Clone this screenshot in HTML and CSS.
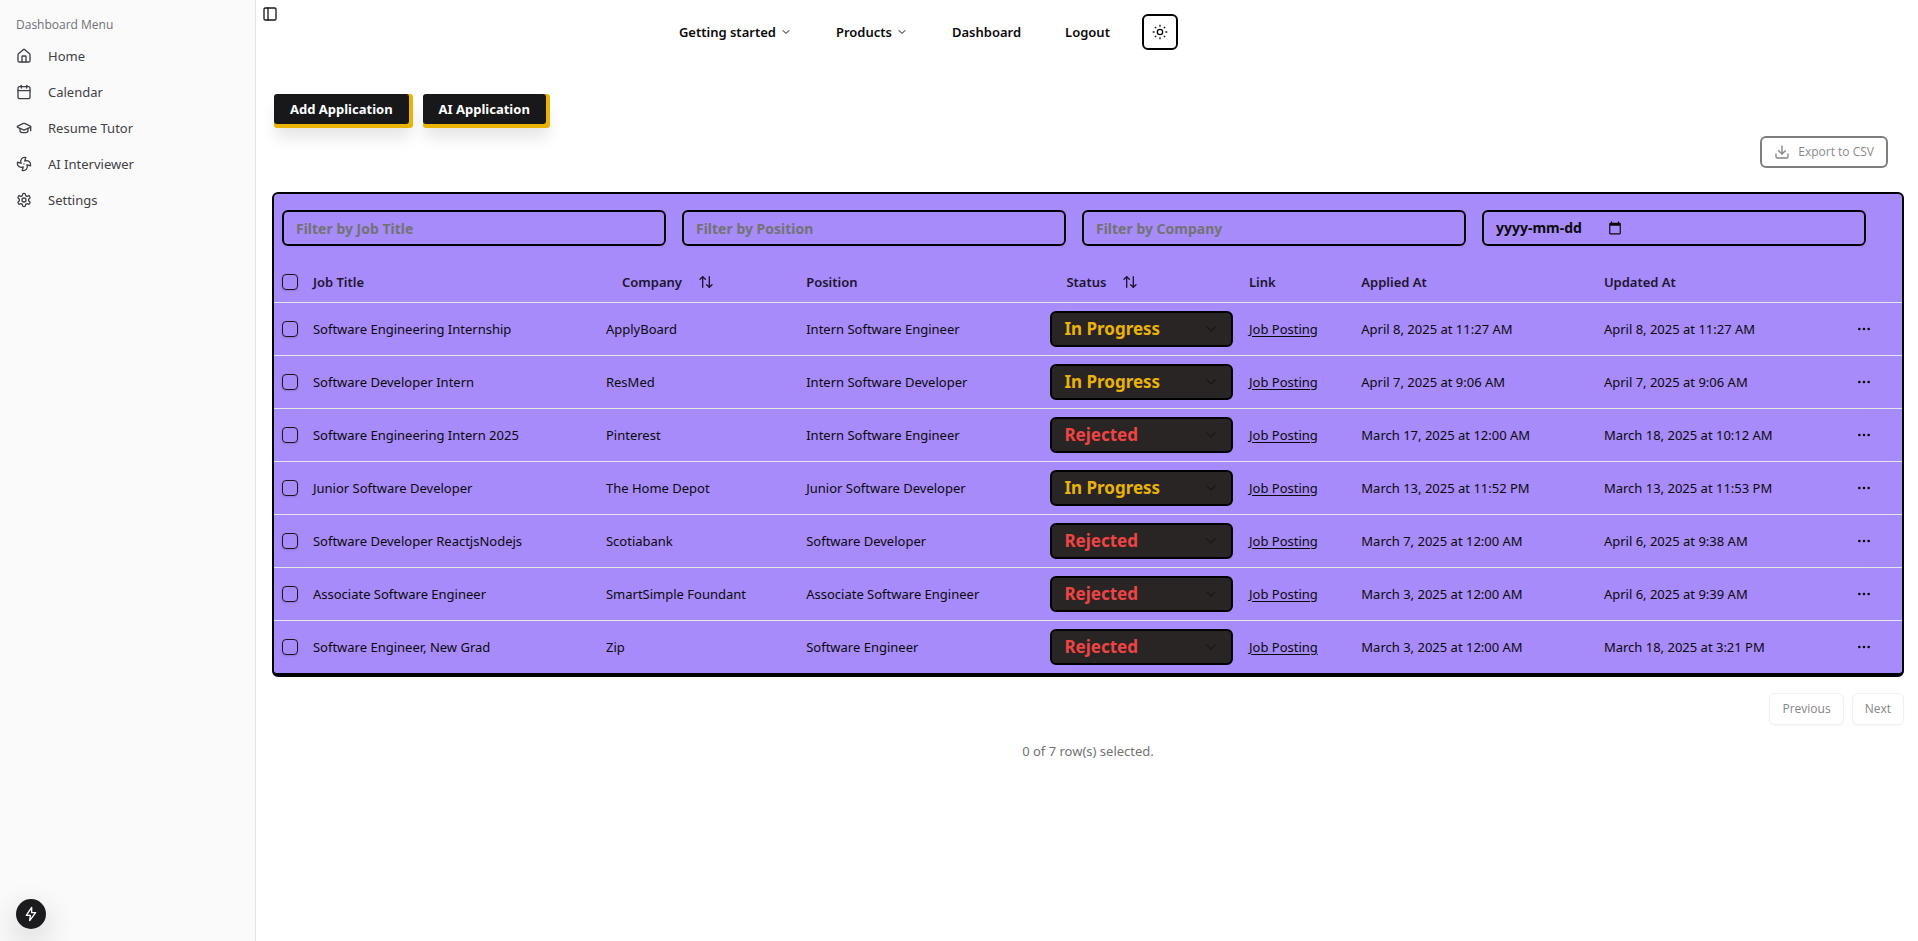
FILE: index.html
```html
<!DOCTYPE html>
<html lang="en">
<head>
<meta charset="utf-8">
<meta name="viewport" content="width=device-width, initial-scale=1">
<title>Job Applications Dashboard</title>
<link rel="stylesheet" href="styles.css">
</head>
<body>
<svg class="sprite" aria-hidden="true">
  <symbol id="i-home" viewBox="0 0 24 24"><path d="M15 21v-8a1 1 0 0 0-1-1h-4a1 1 0 0 0-1 1v8"/><path d="M3 10a2 2 0 0 1 .709-1.528l7-5.999a2 2 0 0 1 2.582 0l7 5.999A2 2 0 0 1 21 10v9a2 2 0 0 1-2 2H5a2 2 0 0 1-2-2z"/></symbol>
  <symbol id="i-calendar" viewBox="0 0 24 24"><path d="M8 2v4"/><path d="M16 2v4"/><rect width="18" height="18" x="3" y="4" rx="2"/><path d="M3 10h18"/></symbol>
  <symbol id="i-cap" viewBox="0 0 24 24"><path d="M21.42 10.922a1 1 0 0 0-.019-1.838L12.83 5.18a2 2 0 0 0-1.66 0L2.6 9.08a1 1 0 0 0 0 1.832l8.57 3.908a2 2 0 0 0 1.66 0z"/><path d="M22 10v6"/><path d="M6 12.5V16a6 3 0 0 0 12 0v-3.5"/></symbol>
  <symbol id="i-fan" viewBox="0 0 24 24"><path d="M10.827 16.379a6.082 6.082 0 0 1-8.618-7.002l5.412 1.45a6.082 6.082 0 0 1 7.002-8.618l-1.45 5.412a6.082 6.082 0 0 1 8.618 7.002l-5.412-1.45a6.082 6.082 0 0 1-7.002 8.618l1.45-5.412Z"/><path d="M12 12v.01"/></symbol>
  <symbol id="i-gear" viewBox="0 0 24 24"><path d="M12.22 2h-.44a2 2 0 0 0-2 2v.18a2 2 0 0 1-1 1.73l-.43.25a2 2 0 0 1-2 0l-.15-.08a2 2 0 0 0-2.73.73l-.22.38a2 2 0 0 0 .73 2.73l.15.1a2 2 0 0 1 1 1.72v.51a2 2 0 0 1-1 1.74l-.15.09a2 2 0 0 0-.73 2.73l.22.38a2 2 0 0 0 2.73.73l.15-.08a2 2 0 0 1 2 0l.43.25a2 2 0 0 1 1 1.73V20a2 2 0 0 0 2 2h.44a2 2 0 0 0 2-2v-.18a2 2 0 0 1 1-1.73l.43-.25a2 2 0 0 1 2 0l.15.08a2 2 0 0 0 2.73-.73l.22-.39a2 2 0 0 0-.73-2.73l-.15-.08a2 2 0 0 1-1-1.74v-.5a2 2 0 0 1 1-1.74l.15-.09a2 2 0 0 0 .73-2.73l-.22-.38a2 2 0 0 0-2.73-.73l-.15.08a2 2 0 0 1-2 0l-.43-.25a2 2 0 0 1-1-1.73V4a2 2 0 0 0-2-2z"/><circle cx="12" cy="12" r="3"/></symbol>
  <symbol id="i-panel" viewBox="0 0 24 24"><rect width="18" height="18" x="3" y="3" rx="2"/><path d="M9 3v18"/></symbol>
  <symbol id="i-chevron" viewBox="0 0 24 24"><path d="m6 9 6 6 6-6"/></symbol>
  <symbol id="i-sun" viewBox="0 0 24 24"><circle cx="12" cy="12" r="4"/><path d="M12 1v3"/><path d="M12 20v3"/><path d="m4.500 4.500 1.700 1.700"/><path d="m17.800 17.800 1.700 1.700"/><path d="M1 12h3"/><path d="M20 12h3"/><path d="m6.200 17.800-1.700 1.700"/><path d="m19.500 4.500-1.700 1.700"/></symbol>
  <symbol id="i-download" viewBox="0 0 24 24"><path d="M21 15v4a2 2 0 0 1-2 2H5a2 2 0 0 1-2-2v-4"/><path d="m7 10 5 5 5-5"/><path d="M12 15V3"/></symbol>
  <symbol id="i-sort" viewBox="0 0 24 24"><path d="m21 16-4 4-4-4"/><path d="M17 20V4"/><path d="m3 8 4-4 4 4"/><path d="M7 4v16"/></symbol>
  <symbol id="i-dots" viewBox="0 0 24 24"><circle cx="12" cy="12" r="1"/><circle cx="19" cy="12" r="1"/><circle cx="5" cy="12" r="1"/></symbol>
  <symbol id="i-date" viewBox="0 0 24 24"><path class="solid" d="M20 3h-1V1h-2v2H7V1H5v2H4c-1.100 0-2 .9-2 2v16c0 1.100.9 2 2 2h16c1.100 0 2-.9 2-2V5c0-1.100-.9-2-2-2zm0 18H4V8h16v13z"/></symbol>
  <symbol id="i-bolt" viewBox="0 0 24 24"><path d="M13 2 5 14h6l-1 8 9-12h-6z"/></symbol>
</svg>

<div class="app">
  <aside class="sidebar">
    <h2 class="sidebar-label">Dashboard Menu</h2>
    <nav class="menu" aria-label="Dashboard Menu">
      <a class="menu-link" href="#home"><svg class="icon"><use href="#i-home"/></svg>Home</a>
      <a class="menu-link" href="#calendar"><svg class="icon"><use href="#i-calendar"/></svg>Calendar</a>
      <a class="menu-link" href="#tutor"><svg class="icon"><use href="#i-cap"/></svg>Resume Tutor</a>
      <a class="menu-link" href="#interviewer"><svg class="icon"><use href="#i-fan"/></svg>AI Interviewer</a>
      <a class="menu-link" href="#settings"><svg class="icon"><use href="#i-gear"/></svg>Settings</a>
    </nav>
    <button class="fab" type="button" aria-label="Quick actions"><svg class="icon"><use href="#i-bolt"/></svg></button>
  </aside>

  <main class="main">
    <header class="topbar">
      <button class="sidebar-toggle" type="button" aria-label="Toggle sidebar"><svg class="icon"><use href="#i-panel"/></svg></button>
      <nav class="topnav" aria-label="Main">
        <button class="nav-item" type="button">Getting started<svg class="icon icon-sm"><use href="#i-chevron"/></svg></button>
        <button class="nav-item" type="button">Products<svg class="icon icon-sm"><use href="#i-chevron"/></svg></button>
        <a class="nav-item" href="#dashboard">Dashboard</a>
        <a class="nav-item" href="#logout">Logout</a>
        <button class="theme-toggle" type="button" aria-label="Toggle theme"><svg class="icon"><use href="#i-sun"/></svg></button>
      </nav>
    </header>

    <div class="content">
      <div class="actions">
        <button class="btn-primary" type="button">Add Application</button>
        <button class="btn-primary" type="button">AI Application</button>
      </div>
      <div class="export-row">
        <button class="btn-export" type="button" disabled><svg class="icon"><use href="#i-download"/></svg>Export to CSV</button>
      </div>

      <section class="card">
        <div class="filters">
          <input class="field" type="text" placeholder="Filter by Job Title" aria-label="Filter by Job Title">
          <input class="field" type="text" placeholder="Filter by Position" aria-label="Filter by Position">
          <input class="field" type="text" placeholder="Filter by Company" aria-label="Filter by Company">
          <div class="field date-field">
            <input class="date-text" type="text" placeholder="yyyy-mm-dd" aria-label="Filter by date">
            <button class="date-button" type="button" aria-label="Open calendar"><svg class="icon"><use href="#i-date"/></svg></button>
          </div>
        </div>
        <table class="table">
          <colgroup>
            <col class="col-check"><col class="col-title"><col class="col-company"><col class="col-position"><col class="col-status"><col class="col-link"><col class="col-applied"><col class="col-updated"><col class="col-menu">
          </colgroup>
          <thead>
            <tr>
              <th><input class="check" type="checkbox" aria-label="Select all"></th>
              <th>Job Title</th>
              <th><button class="sort" type="button">Company<svg class="icon"><use href="#i-sort"/></svg></button></th>
              <th>Position</th>
              <th><button class="sort" type="button">Status<svg class="icon"><use href="#i-sort"/></svg></button></th>
              <th>Link</th>
              <th>Applied At</th>
              <th>Updated At</th>
              <th></th>
            </tr>
          </thead>
          <tbody>
            <tr>
              <td><input class="check" type="checkbox" aria-label="Select row"></td>
              <td>Software Engineering Internship</td>
              <td>ApplyBoard</td>
              <td>Intern Software Engineer</td>
              <td><div class="status"><select class="status-select progress" aria-label="Status"><option>In Progress</option><option>Rejected</option></select><svg class="icon"><use href="#i-chevron"/></svg></div></td>
              <td><a class="posting" href="#posting">Job Posting</a></td>
              <td>April 8, 2025 at 11:27 AM</td>
              <td>April 8, 2025 at 11:27 AM</td>
              <td><button class="row-menu" type="button" aria-label="Open menu"><svg class="icon"><use href="#i-dots"/></svg></button></td>
            </tr>
            <tr>
              <td><input class="check" type="checkbox" aria-label="Select row"></td>
              <td>Software Developer Intern</td>
              <td>ResMed</td>
              <td>Intern Software Developer</td>
              <td><div class="status"><select class="status-select progress" aria-label="Status"><option>In Progress</option><option>Rejected</option></select><svg class="icon"><use href="#i-chevron"/></svg></div></td>
              <td><a class="posting" href="#posting">Job Posting</a></td>
              <td>April 7, 2025 at 9:06 AM</td>
              <td>April 7, 2025 at 9:06 AM</td>
              <td><button class="row-menu" type="button" aria-label="Open menu"><svg class="icon"><use href="#i-dots"/></svg></button></td>
            </tr>
            <tr>
              <td><input class="check" type="checkbox" aria-label="Select row"></td>
              <td>Software Engineering Intern 2025</td>
              <td>Pinterest</td>
              <td>Intern Software Engineer</td>
              <td><div class="status"><select class="status-select rejected" aria-label="Status"><option>Rejected</option><option>In Progress</option></select><svg class="icon"><use href="#i-chevron"/></svg></div></td>
              <td><a class="posting" href="#posting">Job Posting</a></td>
              <td>March 17, 2025 at 12:00 AM</td>
              <td>March 18, 2025 at 10:12 AM</td>
              <td><button class="row-menu" type="button" aria-label="Open menu"><svg class="icon"><use href="#i-dots"/></svg></button></td>
            </tr>
            <tr>
              <td><input class="check" type="checkbox" aria-label="Select row"></td>
              <td>Junior Software Developer</td>
              <td>The Home Depot</td>
              <td>Junior Software Developer</td>
              <td><div class="status"><select class="status-select progress" aria-label="Status"><option>In Progress</option><option>Rejected</option></select><svg class="icon"><use href="#i-chevron"/></svg></div></td>
              <td><a class="posting" href="#posting">Job Posting</a></td>
              <td>March 13, 2025 at 11:52 PM</td>
              <td>March 13, 2025 at 11:53 PM</td>
              <td><button class="row-menu" type="button" aria-label="Open menu"><svg class="icon"><use href="#i-dots"/></svg></button></td>
            </tr>
            <tr>
              <td><input class="check" type="checkbox" aria-label="Select row"></td>
              <td>Software Developer ReactjsNodejs</td>
              <td>Scotiabank</td>
              <td>Software Developer</td>
              <td><div class="status"><select class="status-select rejected" aria-label="Status"><option>Rejected</option><option>In Progress</option></select><svg class="icon"><use href="#i-chevron"/></svg></div></td>
              <td><a class="posting" href="#posting">Job Posting</a></td>
              <td>March 7, 2025 at 12:00 AM</td>
              <td>April 6, 2025 at 9:38 AM</td>
              <td><button class="row-menu" type="button" aria-label="Open menu"><svg class="icon"><use href="#i-dots"/></svg></button></td>
            </tr>
            <tr>
              <td><input class="check" type="checkbox" aria-label="Select row"></td>
              <td>Associate Software Engineer</td>
              <td>SmartSimple Foundant</td>
              <td>Associate Software Engineer</td>
              <td><div class="status"><select class="status-select rejected" aria-label="Status"><option>Rejected</option><option>In Progress</option></select><svg class="icon"><use href="#i-chevron"/></svg></div></td>
              <td><a class="posting" href="#posting">Job Posting</a></td>
              <td>March 3, 2025 at 12:00 AM</td>
              <td>April 6, 2025 at 9:39 AM</td>
              <td><button class="row-menu" type="button" aria-label="Open menu"><svg class="icon"><use href="#i-dots"/></svg></button></td>
            </tr>
            <tr>
              <td><input class="check" type="checkbox" aria-label="Select row"></td>
              <td>Software Engineer, New Grad</td>
              <td>Zip</td>
              <td>Software Engineer</td>
              <td><div class="status"><select class="status-select rejected" aria-label="Status"><option>Rejected</option><option>In Progress</option></select><svg class="icon"><use href="#i-chevron"/></svg></div></td>
              <td><a class="posting" href="#posting">Job Posting</a></td>
              <td>March 3, 2025 at 12:00 AM</td>
              <td>March 18, 2025 at 3:21 PM</td>
              <td><button class="row-menu" type="button" aria-label="Open menu"><svg class="icon"><use href="#i-dots"/></svg></button></td>
            </tr>
          </tbody>
        </table>
      </section>

      <div class="pager">
        <button class="btn-page" type="button" disabled>Previous</button>
        <button class="btn-page" type="button" disabled>Next</button>
      </div>
      <p class="selection">0 of 7 row(s) selected.</p>
    </div>
  </main>
</div>
</body>
</html>
```
FILE: styles.css
```css
*, *::before, *::after { box-sizing: border-box; }

body {
  margin: 0;
  background: #fff;
  color: #0a0a0a;
  font-family: "Noto Sans", "Open Sans", sans-serif;
  font-size: 13px;
  line-height: 20px;
}

button, input, select { font: inherit; color: inherit; margin: 0; }
button { padding: 0; border: 0; background: none; white-space: nowrap; }
a { color: inherit; text-decoration: none; }

.sprite { display: none; }
.icon {
  width: 16px;
  height: 16px;
  flex: none;
  fill: none;
  stroke: currentColor;
  stroke-width: 2;
  stroke-linecap: round;
  stroke-linejoin: round;
}
.icon-sm { width: 12px; height: 12px; }
.solid { fill: currentColor; stroke: none; }

.app { display: flex; min-height: 100vh; }

/* Sidebar */
.sidebar {
  display: flex;
  flex-direction: column;
  flex: none;
  width: 256px;
  padding: 10px 8px 12px 16px;
  border-right: 1px solid #e5e5e5;
  background: #fafafa;
  color: #3f3f46;
}
.sidebar-label {
  margin: 0;
  font-family: "Open Sans", "Noto Sans", sans-serif;
  font-size: 12px;
  font-weight: 500;
  line-height: 30px;
  color: #707078;
}
.menu { display: flex; flex-direction: column; gap: 4px; }
.menu-link { display: flex; align-items: center; gap: 16px; height: 32px; }
.fab {
  display: flex;
  align-items: center;
  justify-content: center;
  width: 30px;
  height: 30px;
  margin-top: auto;
  border-radius: 50%;
  background: #1c1c1e;
  color: #fff;
  box-shadow: 0 12px 32px rgba(0, 0, 0, .2);
}

/* Top bar */
.main { flex: 1; min-width: 0; }
.topbar {
  display: grid;
  grid-template-columns: 4fr auto 7fr;
  align-items: start;
}
.sidebar-toggle {
  display: flex;
  width: 28px;
  height: 28px;
  padding: 6px;
  color: #18181b;
}
.topnav { display: flex; align-items: center; gap: 44px; padding-top: 14px; }
.nav-item { display: flex; align-items: center; gap: 4px; font-weight: 600; }
.theme-toggle {
  display: flex;
  align-items: center;
  justify-content: center;
  width: 36px;
  height: 36px;
  margin-left: -12px;
  border: 2px solid #000;
  border-radius: 6px;
}
.theme-toggle .icon { stroke-linecap: butt; }

/* Page content */
.content { padding: 44px 14px 16px 16px; }
.actions { display: flex; gap: 14px; padding-left: 2px; }
.btn-primary {
  height: 30px;
  padding: 0 16px;
  border-radius: 3px;
  background: #18181b;
  color: #fff;
  font-weight: 700;
  box-shadow: 4px 0 0 #eab308, 0 4px 0 #eab308, 4px 4px 0 #eab308, 2px 14px 15px rgba(0, 0, 0, .1);
}
.export-row { display: flex; justify-content: flex-end; padding: 12px 16px 24px; }
.btn-export {
  display: flex;
  align-items: center;
  gap: 8px;
  height: 32px;
  padding: 0 12px;
  border: 2px solid #000;
  border-radius: 6px;
  font-family: "Open Sans", "Noto Sans", sans-serif;
  font-size: 12px;
  font-weight: 500;
  opacity: .5;
}

.card {
  border: 2px solid #000;
  border-bottom-width: 4px;
  border-radius: 6px;
  background: #a78bfa;
}
.filters { display: flex; gap: 16px; padding: 16px 8px; }
.field {
  flex: 1;
  min-width: 0;
  max-width: 384px;
  height: 36px;
  padding: 0 12px;
  border: 2px solid #000;
  border-radius: 6px;
  background: transparent;
  font-size: 14px;
  font-weight: 700;
  box-shadow: 0 1px 2px rgba(0, 0, 0, .05);
}
.field::placeholder { color: #737373; opacity: 1; }
.date-field { display: flex; align-items: center; gap: 20px; }
.date-text { width: 92px; padding: 0; border: 0; background: transparent; }
.date-text::placeholder { color: #0a0a0a; opacity: 1; }
.date-button .icon { display: block; width: 14px; height: 14px; }

/* Table */
.table { width: 100%; border-collapse: collapse; table-layout: fixed; }
.col-check { width: 1.9%; }
.col-title { width: 18%; }
.col-company { width: 12.3%; }
.col-position { width: 15%; }
.col-status { width: 12.2%; }
.col-link { width: 6.9%; }
.col-applied { width: 14.9%; }
.col-updated { width: 15.5%; }
.col-menu { width: 3.3%; }
th, td { padding: 0 8px; text-align: left; white-space: nowrap; }
th { height: 40px; font-weight: 600; color: #1c1530; }
td { height: 53px; }
tr { border-bottom: 1px solid #e5e5e5; }
tbody tr:last-child { border-bottom: 0; }
.check {
  display: block;
  appearance: none;
  width: 16px;
  height: 16px;
  border: 1px solid #18181b;
  border-radius: 4px;
  box-shadow: 0 1px 2px rgba(0, 0, 0, .15);
}
.sort { display: flex; align-items: center; gap: 16px; padding: 0 16px; }
.status { display: grid; align-items: center; }
.status > * { grid-area: 1 / 1; }
.status-select {
  appearance: none;
  width: 100%;
  height: 36px;
  padding: 0 12px;
  border: 2px solid #000;
  border-radius: 6px;
  background: #292524;
  font-size: 17px;
  font-weight: 700;
}
.status .icon { justify-self: end; margin-right: 14px; color: #1a1817; pointer-events: none; }
.progress { color: #eab308; }
.rejected { color: #ef4444; }
.posting { text-decoration: underline; text-underline-offset: 2px; }
.row-menu { display: flex; align-items: center; justify-content: center; width: 16px; height: 32px; }

/* Footer */
.pager { display: flex; justify-content: flex-end; gap: 8px; padding-top: 16px; }
.btn-page {
  height: 32px;
  padding: 0 12px;
  border: 1px solid #f0f0f0;
  border-radius: 6px;
  color: #858585;
  font-family: "Open Sans", "Noto Sans", sans-serif;
  font-size: 12px;
  font-weight: 500;
  box-shadow: 0 1px 2px rgba(0, 0, 0, .03);
}
.selection { margin: 16px 0 0; text-align: center; color: #737373; }
```
